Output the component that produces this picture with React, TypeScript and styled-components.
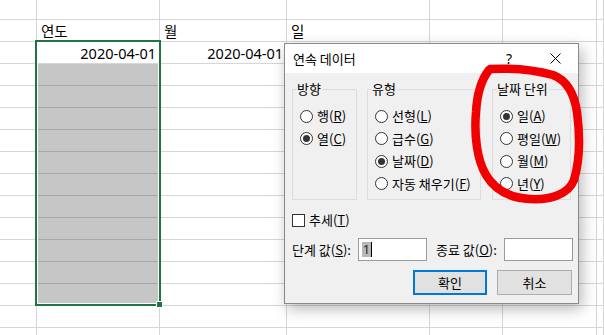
import React from 'react';
import styled, { createGlobalStyle } from 'styled-components';

const GlobalStyle = createGlobalStyle`
  html, body {
    margin: 0;
    padding: 0;
    background: #ffffff;
    overflow: hidden;
  }
  body {
    font-family: 'Noto Sans CJK KR', 'Noto Sans', sans-serif;
    color: #000;
  }
`;

// column widths include the 1px right grid line
const COL_WIDTHS = [37, 123, 127, 143, 73, 94, 7];
const ROW_COUNT = 16;
const FILL_FROM = 3;
const FILL_TO = 13;

const Page = styled.div`
  position: relative;
  width: 604px;
  height: 335px;
  overflow: hidden;
`;

const Sheet = styled.div`
  display: grid;
  grid-template-columns: ${COL_WIDTHS.map((w) => `${w}px`).join(' ')};
  grid-template-rows: 20px repeat(${ROW_COUNT - 1}, 22px);
`;

const Cell = styled.div<{ $fill?: boolean; $right?: boolean }>`
  box-sizing: border-box;
  display: flex;
  align-items: center;
  justify-content: ${({ $right }) => ($right ? 'flex-end' : 'flex-start')};
  padding: ${({ $right }) => ($right ? '0 3px 0 0' : '0 0 0 4px')};
  border-right: 1px solid #d6d6d6;
  border-bottom: 1px solid ${({ $fill }) => ($fill ? '#a8a8a8' : '#d6d6d6')};
  background: ${({ $fill }) => ($fill ? '#c6c6c6' : '#ffffff')};
  overflow: hidden;
  white-space: nowrap;
`;

const HeadText = styled.span`
  font-family: 'Noto Sans CJK KR', sans-serif;
  font-size: 14.5px;
  line-height: 18px;
`;

const DateText = styled.span`
  font-family: 'Noto Sans', sans-serif;
  font-size: 14.5px;
  line-height: 18px;
`;

const SelectionFrame = styled.div`
  position: absolute;
  left: 35px;
  top: 40px;
  width: 126px;
  height: 266px;
  box-sizing: border-box;
  border: 2px solid #217346;
  box-shadow: inset 0 0 0 1px #ffffff;
  pointer-events: none;
`;

const FillHandle = styled.div`
  position: absolute;
  left: 156px;
  top: 301px;
  width: 7px;
  height: 7px;
  box-sizing: border-box;
  background: #217346;
  border: 1px solid #ffffff;
`;

/* ---------- dialog ---------- */

const Dialog = styled.div`
  position: absolute;
  left: 284px;
  top: 43px;
  width: 295px;
  height: 261px;
  box-sizing: border-box;
  border: 1px solid #8a8a8a;
  background: #f0f0f0;
  box-shadow: 3px 5px 14px rgba(0, 0, 0, 0.28);
  display: flex;
  flex-direction: column;
  font-size: 13px;
  line-height: 16px;
`;

const TitleBar = styled.div`
  height: 29px;
  background: #ffffff;
  display: flex;
  align-items: center;
  justify-content: space-between;
  padding-left: 8px;
`;

const Title = styled.span`
  font-size: 13px;
`;

const TitleButtons = styled.div`
  display: flex;
  height: 100%;
`;

const TitleButton = styled.div`
  width: 46px;
  height: 100%;
  display: flex;
  align-items: center;
  justify-content: center;
  font-family: 'Noto Sans', sans-serif;
  font-size: 14px;
`;

const Body = styled.div`
  flex: 1;
  padding: 8px 7px 0 7px;
  display: flex;
  flex-direction: column;
`;

const Groups = styled.div`
  display: flex;
`;

const Group = styled.fieldset<{ $w: number; $gap: number }>`
  box-sizing: border-box;
  width: ${({ $w }) => $w}px;
  height: 119px;
  margin: 0 ${({ $gap }) => $gap}px 0 0;
  padding: 0 0 0 3px;
  min-width: 0;
  border: 1px solid #dcdcdc;
`;

const Legend = styled.legend`
  padding: 0 1px;
  font-size: 13px;
  line-height: 16px;
`;

const OptionList = styled.div`
  display: flex;
  flex-direction: column;
  padding: 8px 0 0 4px;
`;

const OptionRow = styled.div`
  height: 22.5px;
  display: flex;
  align-items: center;
  gap: 4px;
  white-space: nowrap;
`;

const RadioDot = styled.span<{ $on?: boolean }>`
  position: relative;
  width: 13px;
  height: 13px;
  box-sizing: border-box;
  border: 1px solid #333333;
  border-radius: 50%;
  background: #ffffff;
  flex-shrink: 0;

  &::after {
    content: '';
    display: ${({ $on }) => ($on ? 'block' : 'none')};
    position: absolute;
    left: 2px;
    top: 2px;
    width: 7px;
    height: 7px;
    border-radius: 50%;
    background: #333333;
  }
`;

const Mn = styled.span`
  text-decoration: underline;
  text-underline-offset: 1px;
`;

const CheckRow = styled.div`
  margin-top: 12px;
  height: 16px;
  display: flex;
  align-items: center;
  gap: 4px;
`;

const CheckBox = styled.span`
  width: 13px;
  height: 13px;
  box-sizing: border-box;
  border: 1px solid #333333;
  background: #ffffff;
`;

const InputRow = styled.div`
  margin-top: 10px;
  display: flex;
  align-items: center;
  height: 23px;
`;

const FieldLabel = styled.span<{ $w: number }>`
  width: ${({ $w }) => $w}px;
  flex-shrink: 0;
  white-space: nowrap;
`;

const TextBox = styled.div<{ $after?: number }>`
  box-sizing: border-box;
  width: 69px;
  height: 23px;
  flex-shrink: 0;
  margin-right: ${({ $after }) => $after ?? 0}px;
  border: 1px solid #9a9a9a;
  background: #ffffff;
  display: flex;
  align-items: center;
  padding-left: 3px;
`;

const Selected = styled.span`
  background: #b8b8b8;
  color: #222;
  font-family: 'Noto Sans', sans-serif;
  font-size: 12px;
  line-height: 15px;
  padding: 0 1px;
`;

const Caret = styled.span`
  width: 1px;
  height: 15px;
  background: #000;
`;

const ButtonRow = styled.div`
  margin-top: 9px;
  display: flex;
  justify-content: flex-end;
  gap: 10px;
  margin-right: -1px;
`;

const Button = styled.div<{ $primary?: boolean }>`
  box-sizing: border-box;
  width: ${({ $primary }) => ($primary ? 74 : 75)}px;
  height: 25px;
  display: flex;
  align-items: center;
  justify-content: center;
  background: #e1e1e1;
  border: ${({ $primary }) => ($primary ? '2px solid #0078d7' : '1px solid #adadad')};
`;

const Scribble = styled.svg`
  position: absolute;
  left: 0;
  top: 0;
  pointer-events: none;
`;

const Radio: React.FC<{ on?: boolean; label: string; mn: string }> = ({ on, label, mn }) => (
  <OptionRow>
    <RadioDot $on={on} />
    <span>
      {label}(<Mn>{mn}</Mn>)
    </span>
  </OptionRow>
);

const rowContent = (r: number, c: number) => {
  if (r === 1 && c === 1) return <HeadText>연도</HeadText>;
  if (r === 1 && c === 2) return <HeadText>월</HeadText>;
  if (r === 1 && c === 3) return <HeadText>일</HeadText>;
  if (r === 2 && (c === 1 || c === 2)) return <DateText>2020-04-01</DateText>;
  return null;
};

export default function App() {
  const cells = [];
  for (let r = 0; r < ROW_COUNT; r++) {
    for (let c = 0; c < COL_WIDTHS.length; c++) {
      const fill = c === 1 && r >= FILL_FROM && r <= FILL_TO;
      cells.push(
        <Cell key={`${r}-${c}`} $fill={fill} $right={r === 2}>
          {rowContent(r, c)}
        </Cell>
      );
    }
  }

  return (
    <Page>
      <GlobalStyle />
      <Sheet>{cells}</Sheet>
      <SelectionFrame />
      <FillHandle />

      <Dialog>
        <TitleBar>
          <Title>연속 데이터</Title>
          <TitleButtons>
            <TitleButton>?</TitleButton>
            <TitleButton>
              <svg width="11" height="11" viewBox="0 0 11 11">
                <path d="M0.5 0.5 L10.5 10.5 M10.5 0.5 L0.5 10.5" stroke="#000" strokeWidth="1" />
              </svg>
            </TitleButton>
          </TitleButtons>
        </TitleBar>

        <Body>
          <Groups>
            <Group $w={65} $gap={10}>
              <Legend>방향</Legend>
              <OptionList>
                <Radio label="행" mn="R" />
                <Radio on label="열" mn="C" />
              </OptionList>
            </Group>
            <Group $w={114} $gap={11}>
              <Legend>유형</Legend>
              <OptionList>
                <Radio label="선형" mn="L" />
                <Radio label="급수" mn="G" />
                <Radio on label="날짜" mn="D" />
                <Radio label="자동 채우기" mn="F" />
              </OptionList>
            </Group>
            <Group $w={79} $gap={0}>
              <Legend>날짜 단위</Legend>
              <OptionList>
                <Radio on label="일" mn="A" />
                <Radio label="평일" mn="W" />
                <Radio label="월" mn="M" />
                <Radio label="년" mn="Y" />
              </OptionList>
            </Group>
          </Groups>

          <CheckRow>
            <CheckBox />
            <span>
              추세(<Mn>T</Mn>)
            </span>
          </CheckRow>

          <InputRow>
            <FieldLabel $w={66}>
              단계 값(<Mn>S</Mn>):
            </FieldLabel>
            <TextBox $after={9}>
              <Selected>1</Selected>
              <Caret />
            </TextBox>
            <FieldLabel $w={68}>
              종료 값(<Mn>O</Mn>):
            </FieldLabel>
            <TextBox />
          </InputRow>

          <ButtonRow>
            <Button $primary>확인</Button>
            <Button>취소</Button>
          </ButtonRow>
        </Body>
      </Dialog>

      <Scribble width="604" height="335" viewBox="0 0 604 335">
        <path
          d="M490 69 C510 68 535 70 553 75 C566 80 574 92 577 112 C580 135 580 160 574 180 C568 195 550 200 530 199 C510 198 495 190 486 175 C477 160 474 135 476 112 C477 95 481 80 489 70"
          fill="none"
          stroke="#f00000"
          strokeWidth="8.5"
          strokeLinecap="round"
          strokeLinejoin="round"
        />
      </Scribble>
    </Page>
  );
}
